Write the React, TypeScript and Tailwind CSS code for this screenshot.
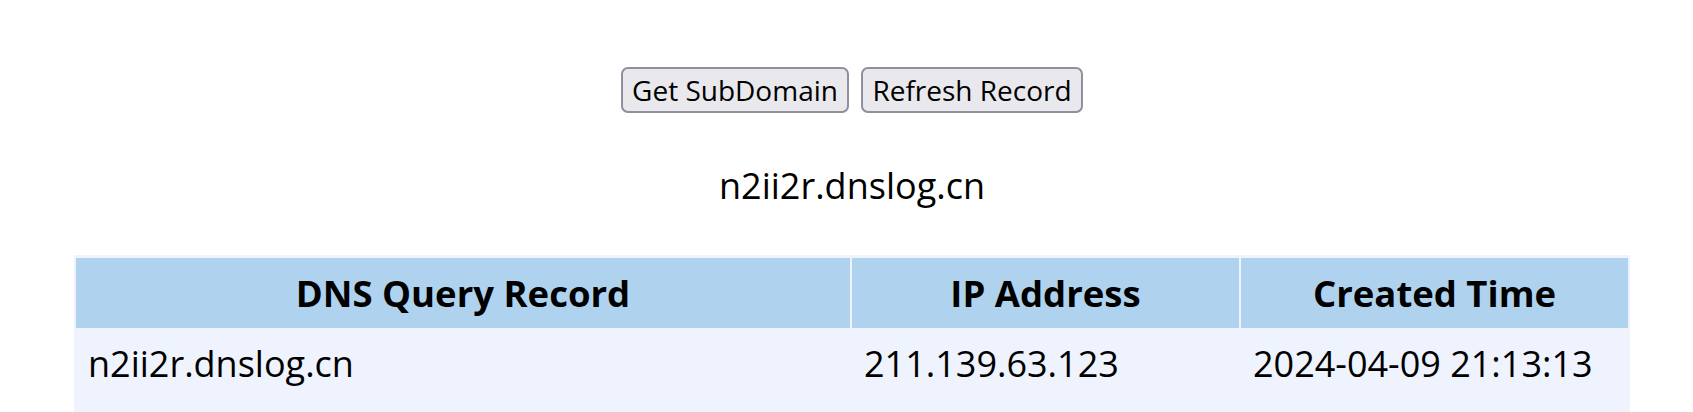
export default function App() {
  const font = { fontFamily: '"Open Sans", "Noto Sans", sans-serif' };

  return (
    <div className="min-h-[412px] bg-white text-black" style={font}>
      <div className="ml-[74px] w-[1556px] pt-[67px]">
        {/* buttons */}
        <div className="flex justify-center gap-[12px]">
          <button className="h-[46px] w-[228px] rounded-[7px] border-2 border-[#8f8f9d] bg-[#e9e9ed] text-[28px] leading-none text-black">
            Get SubDomain
          </button>
          <button className="h-[46px] w-[222px] rounded-[7px] border-2 border-[#8f8f9d] bg-[#e9e9ed] text-[28px] leading-none text-black">
            Refresh Record
          </button>
        </div>

        {/* current subdomain */}
        <div className="mt-[49px] text-center text-[36px] leading-[48px]">n2ii2r.dnslog.cn</div>

        {/* records table */}
        <div className="mt-[45px] bg-[#eef3fd] px-[2px] pt-[3px]">
          <div className="grid grid-cols-[2fr_1fr_1fr] gap-x-[2px]">
            <div className="flex h-[70px] items-center justify-center bg-[#afd3ee] text-[36.5px] font-bold">DNS Query Record</div>
            <div className="flex h-[70px] items-center justify-center bg-[#afd3ee] text-[36.5px] font-bold">IP Address</div>
            <div className="flex h-[70px] items-center justify-center bg-[#afd3ee] text-[36.5px] font-bold">Created Time</div>

            <div className="h-[90px] px-[12px] pt-[12px] text-[36px] leading-[48px]">n2ii2r.dnslog.cn</div>
            <div className="h-[90px] px-[12px] pt-[12px] text-[36px] leading-[48px]">211.139.63.123</div>
            <div className="h-[90px] px-[12px] pt-[12px] text-[36px] leading-[48px]">2024-04-09 21:13:13</div>
          </div>
        </div>
      </div>
    </div>
  );
}
